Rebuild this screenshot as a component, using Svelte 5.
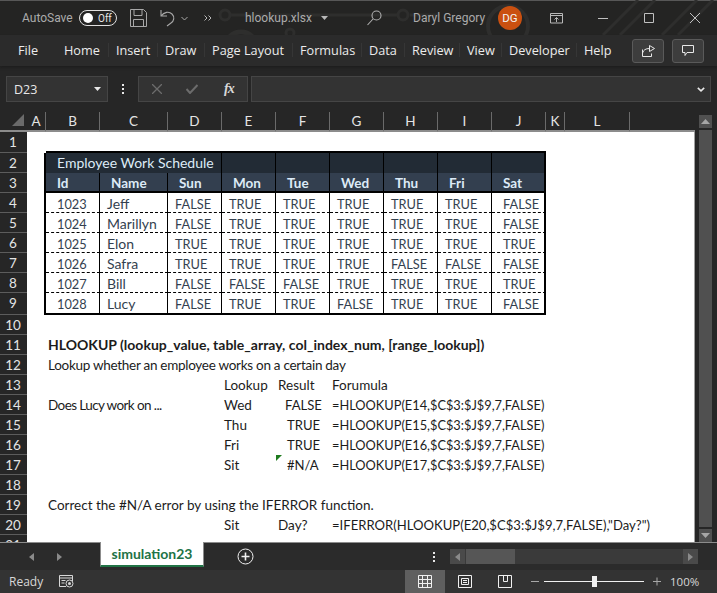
<script>
	const tabs = [
		'File', 'Home', 'Insert', 'Draw', 'Page Layout', 'Formulas',
		'Data', 'Review', 'View', 'Developer', 'Help'
	];
	const cols = ['A', 'B', 'C', 'D', 'E', 'F', 'G', 'H', 'I', 'J', 'K', 'L', ''];
	const rowNums = Array.from({ length: 21 }, (_, i) => i + 1);

	const T = 'TRUE';
	const F = 'FALSE';
	const schedule = [
		['1023', 'Jeff', F, T, T, T, T, T, F],
		['1024', 'Marillyn', F, T, T, T, T, T, F],
		['1025', 'Elon', T, T, T, T, T, T, T],
		['1026', 'Safra', T, T, T, T, F, F, F],
		['1027', 'Bill', F, F, F, T, T, T, T],
		['1028', 'Lucy', F, T, T, F, T, T, F]
	];

	// row -> col letter -> [text, extra class]
	const cells = {
		2: { B: ['Employee Work Schedule', 'in11 title merged'] },
		3: {},
		11: { B: ['HLOOKUP (lookup_value, table_array, col_index_num, [range_lookup])', 'in2 strong'] },
		12: { B: ['Lookup whether an employee works on a certain day', 'in2 tight'] },
		13: { E: ['Lookup', 'in2'], F: ['Result', 'in2'], G: ['Forumula', 'in2'] },
		14: {
			B: ['Does Lucy work on ...', 'in2 tighter'],
			E: ['Wed', 'in2'],
			F: ['FALSE', 'in9 caps'],
			G: ['=HLOOKUP(E14,$C$3:$J$9,7,FALSE)', 'in2 fn']
		},
		15: { E: ['Thu', 'in2'], F: ['TRUE', 'in11 caps'], G: ['=HLOOKUP(E15,$C$3:$J$9,7,FALSE)', 'in2 fn'] },
		16: { E: ['Fri', 'in2'], F: ['TRUE', 'in11 caps'], G: ['=HLOOKUP(E16,$C$3:$J$9,7,FALSE)', 'in2 fn'] },
		17: { E: ['Sit', 'in2'], F: ['#N/A', 'in11 caps'], G: ['=HLOOKUP(E17,$C$3:$J$9,7,FALSE)', 'in2 fn'] },
		19: { B: ['Correct the #N/A error by using the IFERROR function.', 'in2'] },
		20: {
			E: ['Sit', 'in2'],
			F: ['Day?', 'in2'],
			G: ['=IFERROR(HLOOKUP(E20,$C$3:$J$9,7,FALSE),"Day?")', 'in2 caps']
		}
	};
	['Id', 'Name', 'Sun', 'Mon', 'Tue', 'Wed', 'Thu', 'Fri', 'Sat'].forEach((h, i) => {
		cells[3]['BCDEFGHIJ'[i]] = [h, 'in11 head'];
	});
	schedule.forEach((row, r) => {
		cells[r + 4] = {};
		row.forEach((v, i) => {
			const indent = i === 0 || i === 8 ? 'in11' : 'in7';
			const kind = i === 1 ? 'name' : 'caps';
			cells[r + 4]['BCDEFGHIJ'[i]] = [v, `${indent} data ${kind}`];
		});
	});

	function cellClass(r, c) {
		const inTable = c !== '' && 'BCDEFGHIJ'.includes(c);
		let cl = '';
		if (c === '') cl += ' edge';
		if (inTable) {
			if (r === 1 || r === 9) cl += ' line-bottom';
			if (r === 2) cl += ' navy';
			if (r === 3) cl += ' slate line-bottom';
			if (r >= 4 && r < 9) cl += ' dashed';
			if (r >= 2 && r <= 9) cl += c === 'J' ? ' frame-right' : ' v-line';
		}
		if (c === 'A' && r >= 2 && r <= 9) cl += ' frame-left';
		return cl;
	}

	const lookup = (r, c) => cells[r]?.[c] ?? ['', ''];
	// the title in row 2 is merged over B:D
	const hidden = (r, c) => r === 2 && (c === 'C' || c === 'D');
</script>

<div class="window">
	<header class="titlebar">
		<svg class="decor" width="717" height="66" viewBox="0 0 717 66" fill="none" stroke="#2e2e2d" stroke-width="3">
			<path d="M230 15H398M410 15H440" />
			<circle cx="225" cy="15" r="5" />
			<circle cx="403" cy="15" r="5" />
			<circle cx="241" cy="48" r="16" stroke-width="5" />
			<circle cx="290" cy="33" r="4" />
			<circle cx="508" cy="26" r="20" stroke-width="4" />
			<path d="M603 35L638 0M620 35L655 0M662 35L697 0M678 35L713 0" />
		</svg>
		<span class="autosave">AutoSave</span>
		<span class="toggle"><i></i><b>Off</b></span>
		<svg class="ico save" width="17" height="18" viewBox="0 0 17 18" fill="none" stroke="#a8a8a8">
			<path d="M.5.5h13l3 3v14H.5zM4 .5v6h8v-6M3.500 17.500v-7h10v7" />
		</svg>
		<svg class="ico undo" width="16" height="18" viewBox="0 0 16 18" fill="none" stroke="#a8a8a8" stroke-width="1.100">
			<path d="M1 1v6h6M1 7c3-4 8-5 11-2 3 3 2 7-1 9l-4 3" />
		</svg>
		<svg class="ico caret" width="7" height="5" viewBox="0 0 7 5" fill="none" stroke="#a8a8a8"><path d="M.5 1l3 3 3-3" /></svg>
		<svg class="ico more" width="8" height="6" viewBox="0 0 8 6" fill="none" stroke="#b8b8b8"><path d="M.5.500L3 3 .5 5.500M4.500.5L7 3 4.500 5.500" /></svg>
		<span class="file">hlookup.xlsx</span>
		<svg class="ico file-caret" width="7" height="4" viewBox="0 0 7 4"><path d="M0 0h7L3.500 4z" fill="#b8b8b8" /></svg>
		<svg class="ico search" width="15" height="16" viewBox="0 0 15 16" fill="none" stroke="#b0b0b0" stroke-width="1.100">
			<circle cx="9.500" cy="5.500" r="4.500" /><path d="M6 9l-5.500 6" />
		</svg>
		<span class="user">Daryl Gregory</span>
		<span class="avatar">DG</span>
		<svg class="ico present" width="13" height="11" viewBox="0 0 13 11" fill="none" stroke="#b8b8b8">
			<path d="M.5.500h12v9.500H.5zM.5 2.500h12M6.500 9V4.500M4.500 6.500l2-2 2 2" />
		</svg>
		<svg class="ico minimize" width="10" height="1" viewBox="0 0 10 1"><path d="M0 .5h10" stroke="#c0c0c0" /></svg>
		<svg class="ico maximize" width="10" height="10" viewBox="0 0 10 10"><path d="M.5.500h9v9h-9z" fill="none" stroke="#c0c0c0" /></svg>
		<svg class="ico close" width="10" height="10" viewBox="0 0 10 10"><path d="M0 0l10 10M10 0L0 10" stroke="#c0c0c0" /></svg>
	</header>

	<nav class="ribbon">
		<div class="tabs">
			{#each tabs as tab}
				<span class="tab">{tab}</span>
			{/each}
		</div>
		<button class="rbtn share" aria-label="Share">
			<svg width="13" height="13" viewBox="0 0 13 13" fill="none" stroke="#e8e8e8">
				<path d="M.5 5.500v7h9v-3M.5 9c1-3 3-4.500 7-4.500M7.500 1.500v6l5-3z" />
			</svg>
		</button>
		<button class="rbtn comment" aria-label="Comments">
			<svg width="12" height="12" viewBox="0 0 12 12" fill="none" stroke="#e8e8e8">
				<path d="M.5.500h11v7H5l-2 3v-3H.5z" />
			</svg>
		</button>
	</nav>

	<section class="formula">
		<div class="namebox">
			<span>D23</span>
			<svg width="7" height="4" viewBox="0 0 7 4"><path d="M0 0h7L3.500 4z" fill="#e8e8e8" /></svg>
		</div>
		<div class="vdots"><i></i><i></i><i></i></div>
		<div class="fxbox">
			<svg width="10" height="10" viewBox="0 0 10 10"><path d="M0 0l10 10M10 0L0 10" stroke="#6c6c6c" stroke-width="1.300" /></svg>
			<svg width="12" height="10" viewBox="0 0 12 10" fill="none"><path d="M.5 5l3.500 4 7.500-8" stroke="#6c6c6c" stroke-width="2" /></svg>
			<span class="fx">fx</span>
		</div>
		<div class="input">
			<svg width="8" height="5" viewBox="0 0 8 5" fill="none"><path d="M.8.800l3.200 3 3.200-3" stroke="#e8e8e8" stroke-width="1.600" /></svg>
		</div>
	</section>

	<main class="workspace">
		<div class="sheet">
			<div class="corner"><svg width="12" height="12" viewBox="0 0 12 12"><path d="M12 0v12H0z" fill="#6a6a6a" /></svg></div>
			{#each cols as c}
				<div class="colhead" class:last={c === ''}>{c}</div>
			{/each}
			{#each rowNums as r}
				<div class="rowhead">{r}</div>
				{#each cols as c}
					{#if !hidden(r, c)}
						<div class="cell{cellClass(r, c)} {lookup(r, c)[1]}">
							{lookup(r, c)[0]}
							{#if r === 17 && c === 'F'}<span class="err"></span>{/if}
						</div>
					{/if}
				{/each}
			{/each}
		</div>
		<aside class="vscroll">
			<div class="sbtn up"><svg width="9" height="5" viewBox="0 0 9 5"><path d="M0 5L4.500 0 9 5z" fill="#a6a6a6" /></svg></div>
			<div class="vthumb"></div>
			<div class="sbtn down"><svg width="9" height="5" viewBox="0 0 9 5"><path d="M0 0l4.500 5L9 0z" fill="#a6a6a6" /></svg></div>
		</aside>
	</main>

	<div class="sheetbar">
		<svg class="nav-left" width="5" height="8" viewBox="0 0 5 8"><path d="M5 0v8L0 4z" fill="#8a8a8a" /></svg>
		<svg class="nav-right" width="5" height="8" viewBox="0 0 5 8"><path d="M0 0v8l5-4z" fill="#8a8a8a" /></svg>
		<div class="sheet-tab">simulation23</div>
		<svg class="add" width="17" height="17" viewBox="0 0 17 17" fill="none" stroke="#f0f0f0">
			<circle cx="8.500" cy="8.500" r="7.500" /><path d="M8.500 4.500v8M4.500 8.500h8" stroke-width="1.600" />
		</svg>
		<div class="vdots small"><i></i><i></i><i></i></div>
		<div class="hscroll">
			<div class="hbtn"><svg width="5" height="8" viewBox="0 0 5 8"><path d="M5 0v8L0 4z" fill="#8a8a8a" /></svg></div>
			<div class="hthumb"></div>
			<div class="htrack"></div>
			<div class="hbtn"><svg width="5" height="8" viewBox="0 0 5 8"><path d="M0 0v8l5-4z" fill="#8a8a8a" /></svg></div>
		</div>
	</div>

	<footer class="status">
		<span class="ready">Ready</span>
		<svg class="macro" width="15" height="13" viewBox="0 0 15 13" fill="none" stroke="#d8d8d8">
			<path d="M7 11.500H.5V.5h13V6M.5 3h13M2.500 5.500h4M2.500 8h3" />
			<circle cx="10.500" cy="8.500" r="3.500" /><circle cx="10.500" cy="8.500" r="1.500" fill="#d8d8d8" stroke="none" />
		</svg>
		<div class="views">
			<div class="view active">
				<svg width="14" height="13" viewBox="0 0 14 13" fill="none" stroke="#f0f0f0"><path d="M.5.500h13v12H.5zM.5 4.500h13M.5 8.500h13M4.500.5v12M9.500.5v12" /></svg>
			</div>
			<div class="view">
				<svg width="14" height="13" viewBox="0 0 14 13" fill="none" stroke="#f0f0f0"><path d="M.5.500h13v12H.5zM3.500 3.500h7v6h-7zM5 5.500h4M5 7.500h4" /></svg>
			</div>
			<div class="view">
				<svg width="14" height="13" viewBox="0 0 14 13" fill="none" stroke="#f0f0f0"><path d="M.5.500h13v12H.5zM5.500.5v6h4v-6" /></svg>
			</div>
		</div>
		<div class="zoom">
			<svg width="8" height="1" viewBox="0 0 8 1"><path d="M0 .5h8" stroke="#a8a8a8" /></svg>
			<div class="slider"><i></i></div>
			<svg width="8" height="9" viewBox="0 0 8 9"><path d="M0 4.500h8M4 .5v8" stroke="#a8a8a8" /></svg>
		</div>
		<span class="pct">100%</span>
	</footer>
</div>

<style>
	:global(body) {
		margin: 0;
		background: #262626;
	}

	.window {
		width: 717px;
		height: 593px;
		display: flex;
		flex-direction: column;
		overflow: hidden;
		font-family: 'Open Sans', 'Noto Sans', sans-serif;
		background: #262626;
		color: #e8e8e8;
	}

	/* title bar */
	.titlebar {
		position: relative;
		height: 35px;
		flex: none;
		box-sizing: border-box;
		border-top: 1px solid #575757;
		display: flex;
		align-items: center;
		background: #242423;
		font-family: Roboto, 'Open Sans', sans-serif;
		font-size: 12px;
		color: #ababab;
	}
	.decor {
		position: absolute;
		left: 0;
		top: -1px;
	}
	.titlebar > :not(.decor) {
		position: relative;
		flex: none;
	}
	.autosave {
		margin-left: 22px;
		width: 57px;
	}
	.toggle {
		width: 38px;
		height: 16px;
		box-sizing: border-box;
		border: 1px solid #e0e0e0;
		border-radius: 8px;
		display: flex;
		align-items: center;
		padding-left: 3px;
		gap: 5px;
	}
	.toggle i {
		width: 10px;
		height: 10px;
		border-radius: 50%;
		background: #fff;
	}
	.toggle b {
		font-weight: 400;
		font-size: 10px;
		color: #e8e8e8;
	}
	.save { margin-left: 13px; }
	.undo { margin-left: 13px; }
	.caret { margin-left: 5px; }
	.more { margin-left: 16px; }
	.file {
		margin-left: 33px;
		width: 76px;
	}
	.search { margin-left: 39px; }
	.user {
		margin-left: 31px;
		width: 85px;
	}
	.avatar {
		width: 24px;
		height: 24px;
		border-radius: 50%;
		background: #ca5010;
		color: #f4f4f4;
		font-size: 11.500px;
		line-height: 24px;
		text-align: center;
	}
	.present { margin-left: 28px; }
	.minimize { margin-left: 35px; }
	.maximize { margin-left: 36px; }
	.close { margin-left: 36px; }

	/* ribbon tabs */
	.ribbon {
		height: 31px;
		flex: none;
		display: flex;
		align-items: center;
		background: #2b2b2b;
		box-shadow: 0 2px 2px #1f1f1f;
		position: relative;
	}
	.tabs {
		margin-left: 18px;
		width: 614px;
		display: grid;
		grid-template-columns: 46px 52px 49px 47px 88px 69px 43px 55px 42px 75px 48px;
		font-size: 12.700px;
		white-space: nowrap;
		transform: translateY(-1px);
	}
	.tab {
		position: relative;
		color: #ececec;
	}
	.tab:nth-child(n + 2):not(:last-child)::after {
		content: '';
		position: absolute;
		right: 7px;
		top: 2px;
		bottom: 2px;
		width: 1px;
		background: #363636;
	}
	.rbtn {
		width: 32px;
		height: 24px;
		padding: 0;
		box-sizing: border-box;
		border: 1px solid #5a5a5a;
		border-radius: 3px;
		background: #3d3d3d;
		display: flex;
		align-items: center;
		justify-content: center;
	}
	.share { margin-right: 8px; }

	/* formula bar */
	.formula {
		height: 46px;
		flex: none;
		box-sizing: border-box;
		padding: 10px 6px 10px 6px;
		display: flex;
		background: #262626;
	}
	.namebox {
		width: 102px;
		box-sizing: border-box;
		border: 1px solid #454545;
		background: #333;
		display: flex;
		align-items: center;
		justify-content: space-between;
		padding: 0 6px 0 7px;
		font-size: 12.500px;
	}
	.vdots {
		width: 30px;
		display: flex;
		flex-direction: column;
		align-items: center;
		justify-content: center;
		gap: 2px;
	}
	.vdots i {
		width: 2px;
		height: 2px;
		background: #e8e8e8;
	}
	.fxbox {
		width: 110px;
		box-sizing: border-box;
		border: 1px solid #454545;
		background: #333;
		display: flex;
		align-items: center;
		padding-left: 13px;
	}
	.fxbox svg:nth-child(2) { margin-left: 24px; }
	.fx {
		margin-left: 26px;
		font-family: 'Liberation Serif', serif;
		font-style: italic;
		font-weight: 700;
		font-size: 14px;
		letter-spacing: -1px;
		color: #d8d8d8;
	}
	.input {
		flex: 1;
		margin-left: 3px;
		box-sizing: border-box;
		border: 1px solid #454545;
		background: #333;
		display: flex;
		align-items: center;
		justify-content: flex-end;
		padding-right: 5px;
	}

	/* grid */
	.workspace {
		height: 430px;
		flex: none;
		display: flex;
		overflow: hidden;
	}
	.sheet {
		width: 695px;
		flex: none;
		display: grid;
		grid-template-columns: 27px 19px 54px 68px repeat(7, 54px) 19px 65px 65px;
		grid-template-rows: 20px 21px repeat(7, 20px) 22px;
		grid-auto-rows: 20px;
		background: #fff;
		font-family: Lato, 'Liberation Sans', sans-serif;
		font-size: 13.500px;
		color: #1c1c1c;
	}
	.corner,
	.colhead,
	.rowhead {
		background: #262626;
		box-sizing: border-box;
		color: #e4e4e4;
	}
	.corner {
		display: flex;
		align-items: flex-end;
		justify-content: flex-end;
		padding: 0 3px 4px 0;
		border-bottom: 2px solid #8c8c8c;
	}
	.colhead {
		text-align: center;
		line-height: 18px;
		border-right: 1px solid #6a6a6a;
		border-bottom: 2px solid #8c8c8c;
	}
	.colhead.last {
		border-right: 0;
	}
	.rowhead {
		text-align: center;
		padding-right: 1px;
		border-bottom: 1px solid #5c5c5c;
		line-height: 20px;
	}
	.cell {
		position: relative;
		box-sizing: border-box;
		white-space: nowrap;
		line-height: 20px;
		min-width: 0;
	}
	.edge {
		border-right: 1px solid #a0a0a0;
	}
	.merged { grid-column: span 3; }
	.in2 { padding-left: 2px; }
	.in7 { padding-left: 7px; }
	.in9 { padding-left: 9px; }
	.in11 { padding-left: 11px; }
	.strong {
		font-weight: 700;
		font-size: 14px;
	}
	.tight { letter-spacing: -0.28px; }
	.tighter { letter-spacing: -0.6px; }
	.caps { font-size: 13.100px; }
	.fn { font-size: 12.800px; }
	.data {
		color: #333f4f;
		padding-top: 1px;
	}
	.data.caps { font-size: 12.800px; }
	.data.name { font-size: 14px; }
	.navy { background: #222b35; }
	.slate { background: #333f4f; }
	.title {
		color: #ddebf7;
		font-size: 14px;
	}
	.head {
		color: #ddebf7;
		font-weight: 700;
	}
	.line-bottom { border-bottom: 2px solid #000; }
	.dashed { border-bottom: 1px dashed #000; }
	.v-line { border-right: 1px solid #000; }
	.frame-left { border-right: 2px solid #000; }
	.frame-right { border-right: 2px solid #000; }
	.err {
		position: absolute;
		left: 0;
		top: 0;
		width: 0;
		height: 0;
		border-top: 6px solid #1e7b1e;
		border-right: 6px solid transparent;
	}

	.vscroll {
		width: 13px;
		margin-left: 4px;
		padding-top: 3px;
		display: flex;
		flex-direction: column;
		gap: 2px;
	}
	.sbtn {
		height: 13px;
		flex: none;
		background: #505050;
		display: flex;
		align-items: center;
		justify-content: center;
	}
	.vthumb {
		flex: 1;
		background: #505050;
	}

	/* sheet tabs */
	.sheetbar {
		height: 28px;
		flex: none;
		box-sizing: border-box;
		border-top: 1px solid #8c8c8c;
		background: #2b2b2b;
		display: flex;
		align-items: center;
		position: relative;
	}
	.nav-left { margin-left: 29px; }
	.nav-right { margin-left: 23px; }
	.sheet-tab {
		margin-left: 38px;
		align-self: flex-start;
		margin-top: -1px;
		width: 104px;
		height: 25px;
		box-sizing: border-box;
		background: #fff;
		border-left: 1px solid #8c8c8c;
		border-right: 1px solid #8c8c8c;
		border-bottom: 2px solid #217346;
		color: #217346;
		font-family: Lato, 'Liberation Sans', sans-serif;
		font-weight: 700;
		font-size: 14px;
		text-align: center;
		line-height: 23px;
	}
	.add { margin-left: 33px; }
	.vdots.small {
		width: 8px;
		margin-left: 176px;
	}
	.hscroll {
		margin-left: 12px;
		width: 248px;
		height: 15px;
		display: flex;
		background: #3a3a3a;
	}
	.hbtn {
		width: 15px;
		background: #4a4a4a;
		display: flex;
		align-items: center;
		justify-content: center;
	}
	.hthumb {
		width: 49px;
		margin-left: 1px;
		background: #565656;
	}
	.htrack { flex: 1; }

	/* status bar */
	.status {
		height: 23px;
		flex: none;
		display: flex;
		align-items: center;
		background: #333;
		font-size: 12px;
		color: #d8d8d8;
		position: relative;
	}
	.ready {
		margin-left: 9px;
		width: 50px;
	}
	.views {
		margin-left: 331px;
		display: flex;
		align-self: stretch;
	}
	.view {
		width: 40px;
		display: flex;
		align-items: center;
		justify-content: center;
	}
	.view.active { background: #5f5f5f; }
	.zoom {
		margin-left: 6px;
		display: flex;
		align-items: center;
		gap: 5px;
	}
	.slider {
		width: 100px;
		height: 1px;
		background: #f0f0f0;
		position: relative;
		margin-right: 4px;
	}
	.slider i {
		position: absolute;
		left: 48px;
		top: -5px;
		width: 5px;
		height: 11px;
		background: #f0f0f0;
	}
	.pct {
		margin-left: 9px;
		font-size: 11.500px;
	}
</style>
